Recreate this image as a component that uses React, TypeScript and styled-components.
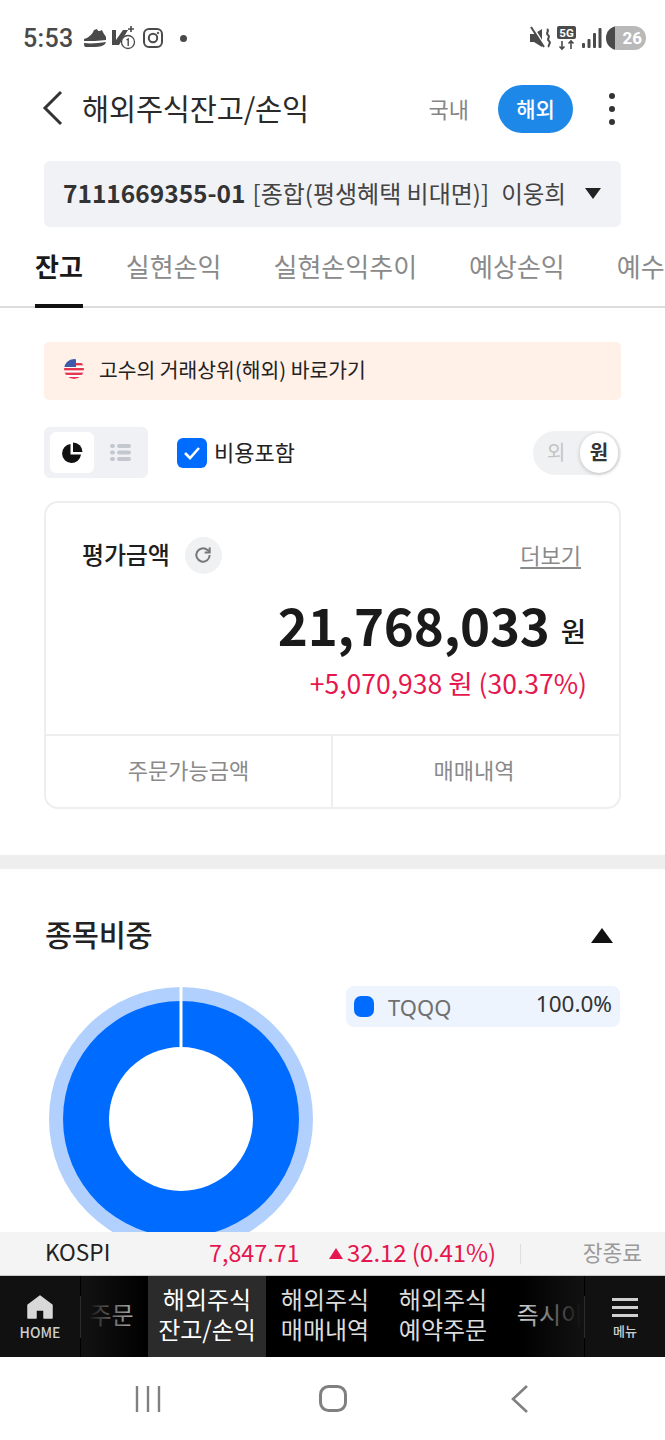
import React from "react";
import styled, { createGlobalStyle } from "styled-components";

const Global = createGlobalStyle`
  html, body { margin: 0; padding: 0; background: #fff; }
  * { box-sizing: border-box; }
  body { font-family: "Noto Sans CJK KR", "Noto Sans", sans-serif; }
`;

const Page = styled.div`
  width: 665px; height: 1440px; display: flex; flex-direction: column; overflow: hidden; background: #fff;
`;
const StatusBar = styled.div`
  height: 76px; flex: none; display: flex; align-items: center; justify-content: space-between;
  padding: 0 19px 0 23px; color: #4a4a4a;
`;
const StatusGroup = styled.div`display: flex; align-items: center; gap: ${(p: { $gap: number }) => p.$gap}px;`;
const Clock = styled.span`font: 500 25px Roboto, sans-serif; letter-spacing: .3px; margin-right: 6px;`;
const StatusDot = styled.i`width: 7px; height: 7px; border-radius: 50%; background: #4a4a4a; margin-left: 13px;`;
const Battery = styled.div`
  width: 40px; height: 24px; border-radius: 12px; overflow: hidden; background: #b9b9b9; color: #fff;
  display: flex; align-items: center; justify-content: flex-end; padding-right: 4px;
  font: 700 17px Roboto, sans-serif; position: relative; margin-left: -1px;
  &::before { content: ""; position: absolute; left: 0; top: 0; bottom: 0; width: 9px; background: #4a4a4a; }
`;
const Header = styled.header`
  height: 64px; flex: none; display: flex; align-items: center; padding: 0 49px 0 42px;
`;
const Title = styled.h1`
  margin: 0 0 2px 18px; flex: 1; font-size: 29.5px; font-weight: 400; color: #2a2a2a; letter-spacing: -.2px; white-space: nowrap;
`;
const MarketLink = styled.span`font-size: 22px; color: #858585; margin-right: 29px;`;
const MarketPill = styled.span`
  width: 75px; height: 48px; border-radius: 24px; background: #1e88e9; color: #fff; font-size: 21px; font-weight: 500;
  display: flex; align-items: center; justify-content: center; margin: 2px 36px 0 0; padding-bottom: 3px;
`;
const Dots = styled.div`
  display: flex; flex-direction: column; gap: 7px; width: 7px; margin-top: 1px;
  span { width: 6px; height: 6px; border-radius: 50%; background: #333; }
`;
const Account = styled.div`
  flex: none; height: 66px; margin: 21px 44px 0; background: #f1f2f6; border-radius: 6px;
  display: flex; align-items: center; padding: 0 20px 3px 19px; color: #3a3a3a; white-space: nowrap;
`;
const AccountNumber = styled.b`font-size: 24.5px; font-weight: 700; color: #333;`;
const AccountType = styled.span`font-size: 24px; margin-left: 7px; color: #444; flex: 1;`;
const AccountName = styled.span`font-size: 23.5px; color: #444; margin-right: 19px;`;
const Caret = styled.i`
  width: 0; height: 0; border-left: 8px solid transparent; border-right: 8px solid transparent; border-top: 11px solid #222; margin-top: 2px;
`;
const Tabs = styled.nav`
  flex: none; height: 81px; display: flex; gap: 52px; padding-left: 35px; overflow: hidden; box-shadow: inset 0 -2px 0 #dcdcdc;
`;
const Tab = styled.div<{ $active?: boolean }>`
  flex: none; height: 81px; padding-top: 19px; font-size: 26px; line-height: 40px; white-space: nowrap;
  font-weight: ${p => (p.$active ? 700 : 400)}; color: ${p => (p.$active ? "#1a1a1a" : "#8a8a8a")};
  box-shadow: ${p => (p.$active ? "inset 0 -4px 0 #111" : "none")};
  margin-right: ${p => (p.$active ? -9 : 0)}px;
`;
const Main = styled.main`flex: none; height: 924px; overflow: hidden;`;
const Summary = styled.section`padding: 34px 44px 46px; border-bottom: 14px solid #eeeeee;`;
const Banner = styled.div`
  height: 58px; background: #fff0e8; border-radius: 5px; display: flex; align-items: center; gap: 15px; padding: 0 0 4px 20px;
  font-size: 20.4px; color: #222;
`;
const Toolbar = styled.div`height: 51px; margin-top: 27px; display: flex; align-items: center;`;
const ViewToggle = styled.div`
  width: 104px; height: 51px; background: #f0f1f5; border-radius: 6px; display: flex; align-items: center; padding-left: 6px;
`;
const ViewButton = styled.div<{ $active?: boolean }>`
  width: 44px; height: 41px; border-radius: 6px; display: flex; align-items: center; justify-content: center;
  background: ${p => (p.$active ? "#fff" : "transparent")}; margin-right: 4px;
`;
const CheckBox = styled.div`
  width: 30px; height: 30px; border-radius: 6px; background: #006cff; margin-left: 29px; display: flex; align-items: center; justify-content: center;
`;
const CheckLabel = styled.span`font-size: 22px; color: #222; margin-left: 7px; flex: 1; padding-bottom: 3px;`;
const Currency = styled.div`
  width: 88px; height: 44px; border-radius: 22px; background: #f0f1f3; display: flex; align-items: center; justify-content: space-between;
  padding: 0 3px 2px 14px; font-size: 20px; color: #c4c4c4;
`;
const CurrencyKnob = styled.span`
  width: 38px; height: 40px; border-radius: 20px; background: #fff; color: #333; font-weight: 700; display: flex; align-items: center; justify-content: center;
  box-shadow: 0 1px 4px rgba(0,0,0,.22); margin-top: 2px; padding-bottom: 3px;
`;
const Card = styled.div`
  height: 308px; margin-top: 23px; border: 2px solid #eeeeee; border-radius: 14px; display: flex; flex-direction: column;
`;
const CardBody = styled.div`flex: 1; padding: 32px 33px 0 36px;`;
const CardTop = styled.div`display: flex; align-items: center; height: 38px;`;
const CardLabel = styled.span`font-size: 24px; font-weight: 500; color: #1e1e1e; letter-spacing: -.2px; padding-bottom: 2px;`;
const Refresh = styled.div`
  width: 37px; height: 37px; border-radius: 50%; background: #f0f1f3; margin: 2px 0 0 15px; display: flex; align-items: center; justify-content: center;
`;
const More = styled.span`
  margin-left: auto; margin-right: 5px; font-size: 22px; color: #8a8a8a; text-decoration: underline; text-underline-offset: 3px;
`;
const AmountRow = styled.div`
  display: flex; justify-content: flex-end; align-items: center; gap: 11px; margin-top: 17px; color: #1a1a1a; line-height: 68px; height: 68px;
`;
const Amount = styled.span`font-size: 51px; font-weight: 700; letter-spacing: -.2px;`;
const AmountUnit = styled.span`font-size: 27.5px; font-weight: 500; line-height: 40px; padding-top: 12px;`;
const Profit = styled.div`text-align: right; font-size: 26.5px; color: #e5174e; line-height: 38px; margin-top: 6px; margin-right: -1px;`;
const CardFoot = styled.div`display: grid; grid-template-columns: 285px 1fr; height: 73px; border-top: 2px solid #eeeeee;`;
const FootCell = styled.div<{ $divided?: boolean }>`
  display: flex; align-items: center; justify-content: center; font-size: 22px; color: #8a8a8a; padding-bottom: 6px;
  border-left: ${p => (p.$divided ? "2px solid #eeeeee" : "none")};
  padding-right: ${p => (p.$divided ? 4 : 0)}px;
`;
const Weights = styled.section`padding: 44px 44px 0 45px;`;
const WeightsHead = styled.div`display: flex; align-items: center; justify-content: space-between; height: 44px; padding-right: 8px;`;
const WeightsTitle = styled.h2`margin: 0 0 4px; font-size: 29.5px; font-weight: 500; color: #222; letter-spacing: -.3px; line-height: 40px;`;
const UpCaret = styled.i`
  width: 0; height: 0; border-left: 11px solid transparent; border-right: 11px solid transparent; border-bottom: 15px solid #111; margin-top: 1px;
`;
const ChartRow = styled.div`display: grid; grid-template-columns: 301px 274px; margin-top: 29px;`;
const Donut = styled.svg`display: block; margin: 1px 0 0 4px;`;
const Legend = styled.div`
  height: 41px; background: #edf4fd; border-radius: 8px; display: flex; align-items: center; padding: 0 8px;
`;
const LegendDot = styled.i`width: 20px; height: 21px; border-radius: 7px; background: #006cff;`;
const LegendName = styled.span`flex: 1; margin-left: 14px; font-size: 22px; line-height: 30px; color: #707070; padding-top: 1px; font-family: "Noto Sans", sans-serif;`;
const LegendValue = styled.span`font-size: 22.5px; line-height: 30px; color: #333; padding-bottom: 5px; font-family: "Noto Sans", sans-serif;`;
const Ticker = styled.div`
  flex: none; height: 44px; background: #f4f4f4; border-bottom: 1px solid #c8c8c8; display: flex; align-items: center; padding: 0 23px 4px 45px;
  font-size: 23.3px; white-space: nowrap;
`;
const TickerName = styled.span`color: #222; width: 164px; font-size: 22.6px;`;
const TickerPrice = styled.span`color: #e5174e; width: 120px;`;
const TickerChange = styled.span`color: #e5174e; display: flex; align-items: center; gap: 4px; font-size: 24px; letter-spacing: -.1px;`;
const TickerUp = styled.i`width: 0; height: 0; border-left: 7px solid transparent; border-right: 7px solid transparent; border-bottom: 11px solid #e5174e; margin-top: 4px;`;
const TickerRule = styled.i`width: 1px; height: 20px; background: #dedede; margin: 4px 0 0 24px;`;
const TickerState = styled.span`margin-left: auto; color: #9a9a9a; font-size: 21.5px;`;
const BottomNav = styled.nav`flex: none; height: 81px; background: #000; display: flex; align-items: stretch; color: #ddd;`;
const NavEnd = styled.div`
  flex: none; width: 80px; background: #111; display: flex; flex-direction: column; align-items: center; justify-content: center;
  font: 500 14px "Noto Sans CJK KR", sans-serif; color: #cfcfcf; gap: 3px; padding-top: 3px;
`;
const MenuLabel = styled.span`font-size: 13px; line-height: 18px;`;
const Strip = styled.div`
  flex: 1; min-width: 0; display: flex; overflow: hidden; position: relative;
  &::before, &::after { content: ""; position: absolute; top: 0; bottom: 0; width: 66px; pointer-events: none; }
  &::before { left: 0; background: linear-gradient(90deg, #111 10%, rgba(17,17,17,0)); }
  &::after { right: 0; background: linear-gradient(270deg, #111 5%, rgba(17,17,17,0)); }
`;
const NavRule = styled.i`flex: none; align-self: center; width: 1px; height: 42px; background: #2c2c2c;`;
const NavItem = styled.div<{ $active?: boolean; $w?: number; $shift?: number }>`
  flex: 0 0 ${p => p.$w ?? 118}px; display: flex; align-items: center; justify-content: center; text-align: center;
  font-size: 24px; line-height: 30px; white-space: pre-line; overflow: visible;
  padding: 0 ${p => p.$shift ?? 0}px 6px 0;
  background: ${p => (p.$active ? "#2b2b2b" : "transparent")}; color: ${p => (p.$active ? "#fff" : "#dcdcdc")};
`;
const SystemNav = styled.div`
  flex: none; height: 83px; display: flex; align-items: center; justify-content: space-between; padding: 0 135px 0 135px;
`;
const SysHome = styled.svg`margin-left: -5px;`;

const Shoe = () => (
  <svg width="24" height="22" viewBox="0 0 24 22" fill="#4a4a4a">
    <path d="M1 12 C5 11 9 8 11 3 L14 2 C15 5 17 4 19 3 C20 6 22 8 23 10 L23 13 C16 14 8 14 1 14Z" />
    <path d="M1 16 C8 17 16 16 23 15 C22 19 17 20 10 20 L3 20 C1 20 1 18 1 16Z" />
  </svg>
);
const VBadge = () => (
  <svg width="28" height="26" viewBox="0 0 28 26" fill="none">
    <path d="M1 5 H5 V15 L12 5 H17 L8 20 H1Z" fill="#4a4a4a" />
    <path d="M20 1v6M17 4h6" stroke="#4a4a4a" strokeWidth="1.6" />
    <circle cx="17" cy="17" r="6.5" fill="#fff" stroke="#4a4a4a" strokeWidth="1.3" />
    <path d="M15.5 15 L17.2 14 V21" stroke="#4a4a4a" strokeWidth="1.4" />
  </svg>
);
const Insta = () => (
  <svg width="20" height="20" viewBox="0 0 20 20" fill="none" stroke="#4a4a4a" strokeWidth="2">
    <rect x="1" y="1" width="18" height="18" rx="5" />
    <circle cx="10" cy="10" r="4.2" />
    <circle cx="15" cy="5" r=".8" fill="#4a4a4a" strokeWidth="1" />
  </svg>
);
const Mute = () => (
  <svg width="23" height="24" viewBox="0 0 23 24" fill="#4a4a4a">
    <path d="M1 8 H5 L13 3 V21 L5 16 H1Z" />
    <path d="M4 1 L15 19" stroke="#fff" strokeWidth="2" />
    <path d="M2 1 L15 21" stroke="#4a4a4a" strokeWidth="2" />
    <path d="M18 3 c3 2 -2 4 1 6 c3 2 -2 4 1 6 c3 2 -2 4 0 6" fill="none" stroke="#4a4a4a" strokeWidth="2" />
  </svg>
);
const FiveG = () => (
  <svg width="20" height="26" viewBox="0 0 20 26">
    <rect x="0" y="1" width="19" height="13" rx="2" fill="#4a4a4a" />
    <text x="9.5" y="12" fontSize="11.5" fontWeight="700" textAnchor="middle" fill="#fff" fontFamily="Roboto, sans-serif">5G</text>
    <path d="M5 16v8M2.5 21.5 5 24l2.5-2.5M14 24v-8M11.5 18.5 14 16l2.5 2.5" stroke="#4a4a4a" strokeWidth="1.6" fill="none" />
  </svg>
);
const Signal = () => (
  <svg width="20" height="24" viewBox="0 0 20 24" fill="#4a4a4a">
    <rect x="0" y="17" width="3" height="5" rx="1" />
    <rect x="5.5" y="13" width="3" height="9" rx="1" />
    <rect x="11" y="7" width="3" height="15" rx="1" />
    <rect x="16.5" y="2" width="3" height="20" rx="1" />
  </svg>
);
const Flag = () => (
  <svg width="20" height="24" viewBox="0 0 20 24">
    <defs><clipPath id="flagc"><circle cx="10" cy="12" r="10" /></clipPath></defs>
    <g clipPath="url(#flagc)">
      <rect y="2" width="20" height="20" fill="#fff" />
      <rect y="11" width="20" height="2.4" fill="#e5384f" />
      <rect y="15.6" width="20" height="2.4" fill="#e5384f" />
      <rect y="20" width="20" height="2" fill="#e5384f" />
      <rect y="2" width="12" height="8" fill="#3e5aa8" />
      <rect x="12" y="6" width="8" height="2.4" fill="#e5384f" />
    </g>
  </svg>
);
const Pie = () => (
  <svg width="22" height="22" viewBox="0 0 22 22" fill="#111">
    <path d="M9.5 2 A9.5 9.5 0 1 0 20 12.5 H9.5Z" />
    <path d="M12 0.5 A9.5 9.5 0 0 1 21.5 10 H12Z" />
  </svg>
);
const ListIcon = () => (
  <svg width="21" height="19" viewBox="0 0 21 19" fill="#c3c7ce">
    <rect x="0" y="1" width="5" height="4" rx="2" /><rect x="7" y="1" width="14" height="4" rx="2" />
    <rect x="0" y="7.5" width="5" height="4" rx="2" /><rect x="7" y="7.5" width="14" height="4" rx="2" />
    <rect x="0" y="14" width="5" height="4" rx="2" /><rect x="7" y="14" width="14" height="4" rx="2" />
  </svg>
);

export default function App() {
  return (
    <Page>
      <Global />
      <StatusBar>
        <StatusGroup $gap={4}>
          <Clock>5:53</Clock>
          <Shoe /><VBadge /><Insta />
          <StatusDot />
        </StatusGroup>
        <StatusGroup $gap={5}>
          <Mute /><FiveG /><Signal /><Battery>26</Battery>
        </StatusGroup>
      </StatusBar>
      <Header>
        <svg width="22" height="36" viewBox="0 0 22 36" fill="none" stroke="#333" strokeWidth="3"><path d="M19 2 L3 18 L19 34" /></svg>
        <Title>해외주식잔고/손익</Title>
        <MarketLink>국내</MarketLink>
        <MarketPill>해외</MarketPill>
        <Dots><span /><span /><span /></Dots>
      </Header>
      <Account>
        <AccountNumber>7111669355-01</AccountNumber>
        <AccountType>[종합(평생혜택 비대면)]</AccountType>
        <AccountName>이웅희</AccountName>
        <Caret />
      </Account>
      <Tabs>
        <Tab $active>잔고</Tab>
        <Tab>실현손익</Tab>
        <Tab>실현손익추이</Tab>
        <Tab>예상손익</Tab>
        <Tab>예수금</Tab>
      </Tabs>
      <Main>
        <Summary>
          <Banner><Flag />고수의 거래상위(해외) 바로가기</Banner>
          <Toolbar>
            <ViewToggle>
              <ViewButton $active><Pie /></ViewButton>
              <ViewButton><ListIcon /></ViewButton>
            </ViewToggle>
            <CheckBox>
              <svg width="18" height="14" viewBox="0 0 18 14" fill="none" stroke="#fff" strokeWidth="2.6"><path d="M2 7 L7 12 L16 2" /></svg>
            </CheckBox>
            <CheckLabel>비용포함</CheckLabel>
            <Currency>외<CurrencyKnob>원</CurrencyKnob></Currency>
          </Toolbar>
          <Card>
            <CardBody>
              <CardTop>
                <CardLabel>평가금액</CardLabel>
                <Refresh>
                  <svg width="20" height="20" viewBox="0 0 24 24" fill="none" stroke="#777" strokeWidth="2.4">
                    <path d="M20 12a8 8 0 1 1-2.6-5.9L20 8.5" /><path d="M20 3v6h-6" />
                  </svg>
                </Refresh>
                <More>더보기</More>
              </CardTop>
              <AmountRow><Amount>21,768,033</Amount><AmountUnit>원</AmountUnit></AmountRow>
              <Profit>+5,070,938 원 (30.37%)</Profit>
            </CardBody>
            <CardFoot>
              <FootCell>주문가능금액</FootCell>
              <FootCell $divided>매매내역</FootCell>
            </CardFoot>
          </Card>
        </Summary>
        <Weights>
          <WeightsHead>
            <WeightsTitle>종목비중</WeightsTitle>
            <UpCaret />
          </WeightsHead>
          <ChartRow>
            <Donut width="264" height="264" viewBox="0 0 264 264">
              <circle cx="132" cy="132" r="132" fill="#b2d0fd" />
              <circle cx="132" cy="132" r="118" fill="#006cff" />
              <circle cx="132" cy="132" r="72" fill="#fff" />
              <rect x="130.5" y="0" width="3" height="62" fill="#fff" />
            </Donut>
            <div>
              <Legend>
                <LegendDot />
                <LegendName>TQQQ</LegendName>
                <LegendValue>100.0%</LegendValue>
              </Legend>
            </div>
          </ChartRow>
        </Weights>
      </Main>
      <Ticker>
        <TickerName>KOSPI</TickerName>
        <TickerPrice>7,847.71</TickerPrice>
        <TickerChange><TickerUp />32.12 (0.41%)</TickerChange>
        <TickerRule />
        <TickerState>장종료</TickerState>
      </Ticker>
      <BottomNav>
        <NavEnd>
          <svg width="26" height="24" viewBox="0 0 26 24" fill="#d8d8d8" stroke="#d8d8d8" strokeWidth="1.5" strokeLinejoin="round"><path d="M13 1 L25 10 V23 H17 V15 H9 V23 H1 V10Z" /></svg>
          HOME
        </NavEnd>
        <NavRule />
        <Strip>
          <NavItem $w={67} $shift={6}>{"주문"}</NavItem>
          <NavItem $active>{"해외주식\n잔고/손익"}</NavItem>
          <NavItem>{"해외주식\n매매내역"}</NavItem>
          <NavItem>{"해외주식\n예약주문"}</NavItem>
          <NavItem>{"즉시이체"}</NavItem>
        </Strip>
        <NavRule />
        <NavEnd>
          <svg width="26" height="22" viewBox="0 0 26 22" fill="#cfcfcf"><rect y="1" width="26" height="3" /><rect y="9" width="26" height="3" /><rect y="17" width="26" height="3" /></svg>
          <MenuLabel>메뉴</MenuLabel>
        </NavEnd>
      </BottomNav>
      <SystemNav>
        <svg width="26" height="26" viewBox="0 0 26 26" fill="none" stroke="#808080" strokeWidth="2.4"><path d="M2 0v26M13 0v26M24 0v26" /></svg>
        <SysHome width="28" height="27" viewBox="0 0 28 27" fill="none" stroke="#808080" strokeWidth="3"><rect x="1.5" y="1.5" width="25" height="24" rx="8" /></SysHome>
        <svg width="20" height="28" viewBox="0 0 20 28" fill="none" stroke="#808080" strokeWidth="2.6"><path d="M17 1 L3 14 L17 27" /></svg>
      </SystemNav>
    </Page>
  );
}
